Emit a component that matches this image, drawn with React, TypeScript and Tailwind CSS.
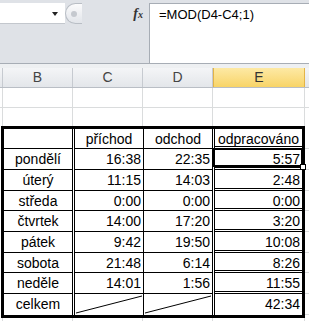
import React from "react"

type Day = { name: string; from: string; to: string; worked: string }

const days: Day[] = [
  { name: "pondělí", from: "16:38", to: "22:35", worked: "5:57" },
  { name: "úterý", from: "11:15", to: "14:03", worked: "2:48" },
  { name: "středa", from: "0:00", to: "0:00", worked: "0:00" },
  { name: "čtvrtek", from: "14:00", to: "17:20", worked: "3:20" },
  { name: "pátek", from: "9:42", to: "19:50", worked: "10:08" },
  { name: "sobota", from: "21:48", to: "6:14", worked: "8:26" },
  { name: "neděle", from: "14:01", to: "1:56", worked: "11:55" },
]

// row heights inside the bordered table (header row first, celkem last)
const rowHeights = [20, 21, 21, 20, 21, 21, 20, 21, 21]
const heightClass: Record<number, string> = { 20: "h-[20px]", 21: "h-[21px]" }

const DoubleLine = () => (
  <div className="w-[3px] shrink-0 border-x border-black bg-white" />
)

const Diagonal = () => (
  <svg className="absolute inset-0 h-full w-full" viewBox="0 0 68 21" preserveAspectRatio="none">
    <line x1="1" y1="19" x2="67" y2="2" stroke="#000" strokeWidth="1" vectorEffect="non-scaling-stroke" />
  </svg>
)

const FormulaBar = () => (
  <div className="flex h-[64px] border-b border-[#a7adb5] bg-[#dfe2e7] pt-[3px]">
    <div className="flex h-[21px] w-[149px] shrink-0 items-center">
      <div className="flex h-full w-[65px] items-center justify-end border-b border-[#c3c7cd] bg-white pr-[7px]">
        <div className="mt-[1px] h-0 w-0 border-x-[3px] border-t-[4px] border-x-transparent border-t-[#222]" />
      </div>
      <div className="flex h-full w-[17px] items-center rounded-l-full border border-r-0 border-[#b9bec5] bg-gradient-to-b from-[#fbfbfc] to-[#e2e5ea] pl-[5px]">
        <div className="h-[6px] w-[6px] rounded-full bg-[#c5c9cf]" />
      </div>
      <div className="flex flex-1 justify-end pr-[6px] font-['Liberation_Serif',serif] italic font-bold text-[#333]">
        <span className="text-[14px] leading-none">f</span>
        <span className="mt-[3px] text-[10px] leading-none">x</span>
      </div>
    </div>
    <div className="flex-1 border-l border-t border-[#a7adb5] bg-white pl-[9px] pt-[3px] font-['Liberation_Sans',Arial,sans-serif] text-[13px] leading-[16px] text-black">
      =MOD(D4-C4;1)
    </div>
  </div>
)

const ColumnHeaders = () => (
  <div className="flex h-[20px] border-b border-[#b9bec5] bg-gradient-to-b from-[#f4f5f7] to-[#e3e6ea] text-[14px] leading-[19px] text-[#444]">
    <div className="w-[3px] border-r border-[#c6cad0]" />
    <div className="w-[70px] border-r border-[#c6cad0] text-center">B</div>
    <div className="w-[70px] border-r border-[#c6cad0] text-center">C</div>
    <div className="w-[70px] border-r border-[#c6cad0] text-center">D</div>
    <div className="w-[92px] border-x border-[#e3b447] bg-gradient-to-b from-[#fde9a4] to-[#f8d466] text-center text-[#333]">E</div>
    <div className="flex-1" />
  </div>
)

const GridRow = ({ h, line = true }: { h: string; line?: boolean }) => (
  <div className={`flex ${h} ${line ? "border-b border-[#dadcdd]" : ""}`}>
    <div className="w-[3px] border-r border-[#dadcdd]" />
    <div className="w-[70px] border-r border-[#dadcdd]" />
    <div className="w-[70px] border-r border-[#dadcdd]" />
    <div className="w-[70px] border-r border-[#dadcdd]" />
    <div className="w-[92px] border-r border-[#dadcdd]" />
    <div className="flex-1" />
  </div>
)

const TableRow = ({
  h,
  last,
  children,
}: {
  h: number
  last?: boolean
  children: [React.ReactNode, React.ReactNode, React.ReactNode, React.ReactNode]
}) => {
  const line = last ? "" : "border-b border-black"
  return (
    <div className={`flex ${heightClass[h]} text-[14px] leading-[20px] text-black`}>
      <div className={`w-[68px] shrink-0 text-center ${line}`}>{children[0]}</div>
      <DoubleLine />
      <div className={`relative w-[68px] shrink-0 pr-[2px] text-right ${line}`}>{children[1]}</div>
      <div className="w-[1px] shrink-0 bg-black" />
      <div className={`relative w-[68px] shrink-0 pr-[2px] text-right ${line}`}>{children[2]}</div>
      <DoubleLine />
      <div className={`relative flex-1 pr-[2px] text-right ${last ? "" : "border-b-[3px] border-double border-black"}`}>
        {children[3]}
      </div>
    </div>
  )
}

export default function App() {
  return (
    <div className="h-[321px] w-[309px] overflow-hidden bg-white font-['Liberation_Sans',Arial,sans-serif]">
      <FormulaBar />
      <div className="h-[4px] bg-[#eef0f2]" />
      <ColumnHeaders />
      <GridRow h="h-[20px]" />
      <GridRow h="h-[18px]" line={false} />

      <div className="flex">
        <div className="w-[1px]" />
        <div className="w-[304px] shrink-0 border-[3px] border-black bg-white">
          <TableRow h={rowHeights[0]}>
            {""}
            <span className="block pl-[2px] text-center">příchod</span>
            <span className="block pl-[2px] text-center">odchod</span>
            <span className="block pl-[2px] text-center">odpracováno</span>
          </TableRow>
          {days.map((d, i) => (
            <TableRow key={d.name} h={rowHeights[i + 1]}>
              {d.name}
              {d.from}
              {d.to}
              {i === 0 ? (
                <>
                  {d.worked}
                  <div className="absolute -left-[2px] -top-[1px] -right-[1px] bottom-0 border-2 border-black" />
                  <div className="absolute -bottom-[3px] -right-[4px] h-[6px] w-[6px] border border-black bg-white" />
                </>
              ) : (
                d.worked
              )}
            </TableRow>
          ))}
          <TableRow h={rowHeights[8]} last>
            celkem
            <Diagonal />
            <Diagonal />
            42:34
          </TableRow>
        </div>
        <div className="flex flex-1 flex-col pt-[3px]">
          {rowHeights.map((h, i) => (
            <div key={i} className={`${heightClass[h]} border-b border-[#dadcdd]`} />
          ))}
        </div>
      </div>

      <GridRow h="h-[10px]" line={false} />
    </div>
  )
}
